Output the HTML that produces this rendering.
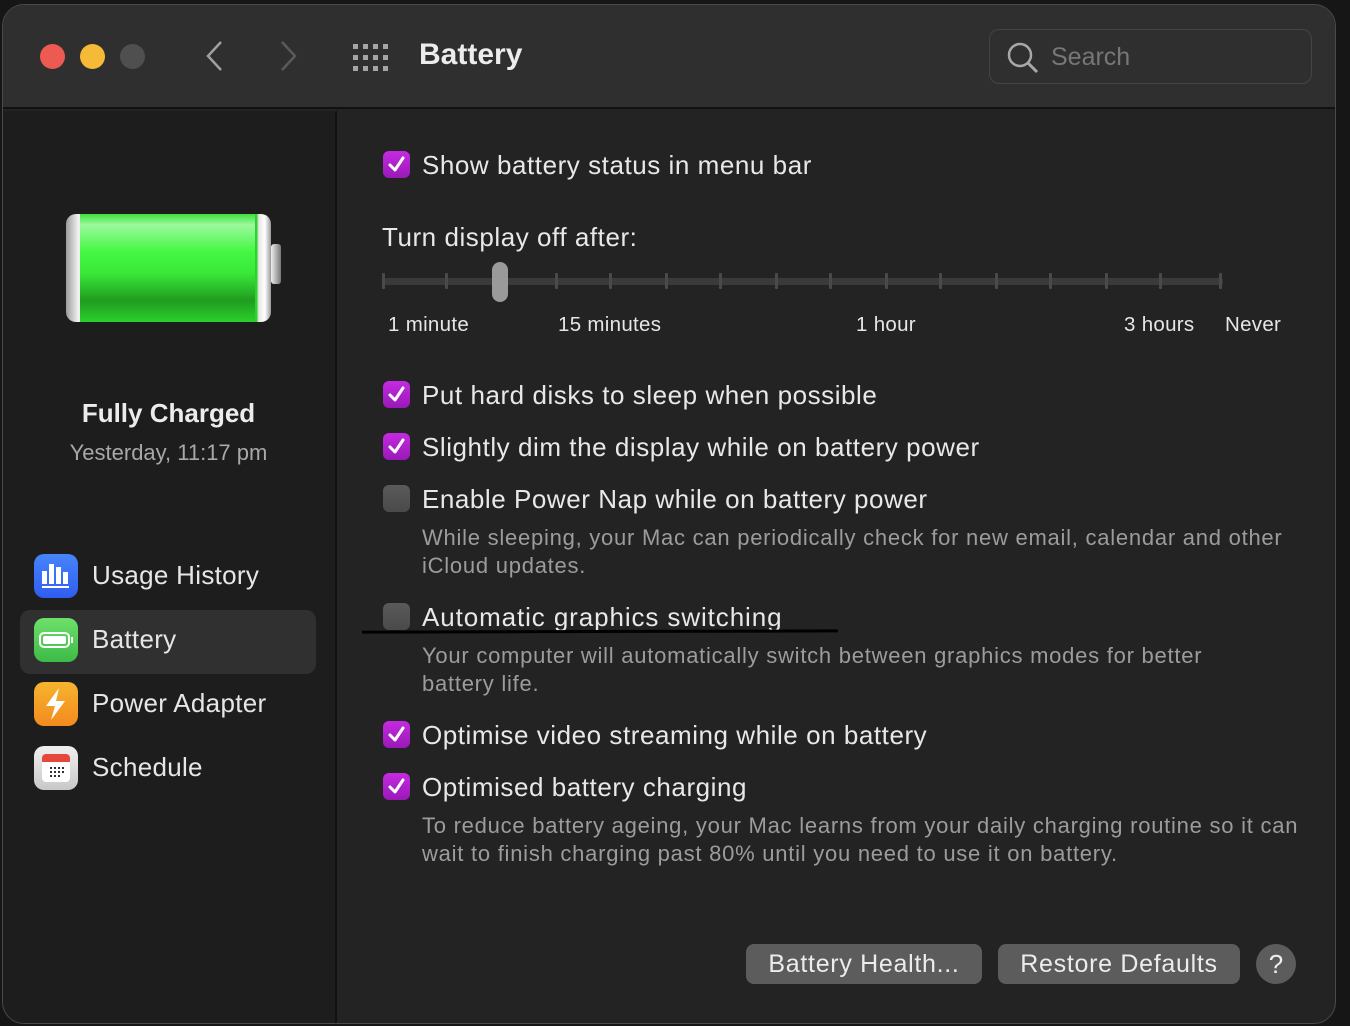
<!DOCTYPE html>
<html><head><meta charset="utf-8"><style>
*{margin:0;padding:0;box-sizing:border-box}
body{width:1350px;height:1026px;background:#161616;font-family:"Liberation Sans",sans-serif;position:relative;overflow:hidden;color:#e6e6e6}
.win{position:absolute;left:2px;top:4px;width:1334px;height:1020px;border-radius:22px;overflow:hidden;background:#232323;border:1px solid #4a4a4a}
.title{position:absolute;left:0;top:0;width:100%;height:104px;background:#2f2f2f;border-bottom:2px solid #111}
.side{position:absolute;left:-3px;top:106px;width:337px;height:920px;background:#1d1d1d;border-right:2px solid #111}
.sb{position:absolute;left:0;top:-5px;width:337px;height:920px}
.a{position:absolute;white-space:nowrap}
.cb{position:absolute;width:27px;height:27px;border-radius:6px;background:linear-gradient(#c42be0,#9a18b8)}
.cb svg{position:absolute;left:4px;top:4px}
.ub{position:absolute;width:27px;height:27px;border-radius:6px;background:linear-gradient(#5a5a5a,#4a4a4a)}
.lbl{font-size:26px;letter-spacing:0.55px;color:#e8e8e8}
.desc{font-size:22px;letter-spacing:0.75px;color:#9c9c9c;line-height:28px}
.sm{font-size:20.5px;letter-spacing:0.3px}
.tick{position:absolute;top:273px;width:3px;height:16px;background:#4a4a4a;border-radius:1px}
.btn{position:absolute;top:944px;height:40px;background:#5c5c5c;border-radius:8px;font-size:25px;letter-spacing:0.7px;color:#ececec;text-align:center;line-height:40px}
.ic{position:absolute;left:34px;width:44px;height:44px;border-radius:10px}
.sl{font-size:26px;letter-spacing:0.3px;left:92px}
</style></head><body>
<div class="win">
<div class="title">
<div class="a" style="left:37px;top:39px;width:25px;height:25px;border-radius:50%;background:#ed5a52"></div>
<div class="a" style="left:77px;top:39px;width:25px;height:25px;border-radius:50%;background:#f6bb36"></div>
<div class="a" style="left:117px;top:39px;width:25px;height:25px;border-radius:50%;background:#4f4f4f"></div>
<svg class="a" style="left:200px;top:34px" width="24" height="34"><path d="M18 3 L5 17 L18 31" stroke="#a0a0a0" stroke-width="2.5" fill="none"/></svg>
<svg class="a" style="left:274px;top:34px" width="24" height="34"><path d="M5 3 L18 17 L5 31" stroke="#5a5a5a" stroke-width="2.5" fill="none"/></svg>
<svg class="a" style="left:350px;top:39px" width="38" height="30" fill="#a5a5a5">
<rect x="0" y="0" width="5" height="5"/><rect x="10" y="0" width="5" height="5"/><rect x="20" y="0" width="5" height="5"/><rect x="30" y="0" width="5" height="5"/>
<rect x="0" y="11" width="5" height="5"/><rect x="10" y="11" width="5" height="5"/><rect x="20" y="11" width="5" height="5"/><rect x="30" y="11" width="5" height="5"/>
<rect x="0" y="22" width="5" height="5"/><rect x="10" y="22" width="5" height="5"/><rect x="20" y="22" width="5" height="5"/><rect x="30" y="22" width="5" height="5"/></svg>
<div class="a" style="left:416px;top:33px;font-size:30px;font-weight:bold;color:#ececec">Battery</div>
<div class="a" style="left:986px;top:24px;width:323px;height:55px;border:1.5px solid #444;border-radius:10px;background:#2f2f2f"></div>
<svg class="a" style="left:1003px;top:36px" width="34" height="36"><circle cx="14" cy="14" r="11" stroke="#a8a8a8" stroke-width="2.5" fill="none"/><path d="M22 22 L31 31" stroke="#a8a8a8" stroke-width="3"/></svg>
<div class="a" style="left:1048px;top:38px;font-size:25px;color:#777">Search</div>
</div>
<div class="side"><div class="sb">
<div class="a" style="left:66px;top:108px;width:205px;height:108px;border-radius:10px;background:linear-gradient(90deg,#9a9a9a,#f2f2f2 6%,#cfcfcf 12%,#2ed02e 13%,#2ed02e 93%,#e6e6e6 94%,#fff 97%,#999)"></div>
<div class="a" style="left:80px;top:108px;width:175px;height:108px;background:linear-gradient(#3de03d,#9cf99c 10%,#44f844 35%,#39e839 55%,#1f9c1f 80%,#2bd02b)"></div>
<div class="a" style="left:271px;top:138px;width:10px;height:40px;border-radius:3px;background:linear-gradient(90deg,#eee,#777)"></div>
<div class="a" style="left:0;width:337px;text-align:center;top:292px;font-size:26px;font-weight:bold;color:#ececec">Fully Charged</div>
<div class="a" style="left:0;width:337px;text-align:center;top:334px;font-size:22px;color:#a8a8a8">Yesterday, 11:17 pm</div>
<div class="a" style="left:20px;top:504px;width:296px;height:64px;border-radius:10px;background:#303030"></div>
<div class="ic" style="top:448px;background:linear-gradient(#4785fb,#2f5df0)"><svg width="44" height="44"><g fill="#fff"><rect x="8" y="17" width="5" height="13"/><rect x="15" y="10" width="5" height="20"/><rect x="22" y="13" width="5" height="17"/><rect x="29" y="18" width="5" height="12"/><rect x="8" y="32" width="27" height="2"/></g></svg></div>
<div class="a sl" style="top:454px">Usage History</div>
<div class="ic" style="top:512px;background:linear-gradient(#6ee06a,#3cbb47)"><svg width="44" height="44"><rect x="6" y="15" width="29" height="14" rx="4" stroke="#fff" stroke-width="2" fill="none"/><rect x="9" y="18" width="23" height="8" rx="2" fill="#fff"/><rect x="37" y="19" width="2" height="6" fill="#fff"/></svg></div>
<div class="a sl" style="top:518px">Battery</div>
<div class="ic" style="top:576px;background:linear-gradient(#f6b42d,#f38a1f)"><svg width="44" height="44"><path d="M25 6 L12 24 L21 24 L17 38 L31 19 L22 19 Z" fill="#fff"/></svg></div>
<div class="a sl" style="top:582px">Power Adapter</div>
<div class="ic" style="top:640px;background:linear-gradient(#f0f0f0,#c8c8c8)"><svg width="44" height="44"><rect x="8" y="8" width="28" height="28" rx="4" fill="#fff"/><path d="M8 16 V12 a4 4 0 0 1 4 -4 H32 a4 4 0 0 1 4 4 V16 Z" fill="#e5473c"/><g fill="#333"><rect x="16" y="21" width="2" height="2"/><rect x="20" y="21" width="2" height="2"/><rect x="24" y="21" width="2" height="2"/><rect x="28" y="21" width="2" height="2"/><rect x="16" y="25" width="2" height="2"/><rect x="20" y="25" width="2" height="2"/><rect x="24" y="25" width="2" height="2"/><rect x="28" y="25" width="2" height="2"/><rect x="16" y="29" width="2" height="2"/><rect x="20" y="29" width="2" height="2"/><rect x="24" y="29" width="2" height="2"/></g></svg></div>
<div class="a sl" style="top:646px">Schedule</div>
</div></div>
</div>
<div class="cb" style="left:383px;top:151px"><svg width="19" height="19"><path d="M3 10 L8 15 L16 3" stroke="#fff" stroke-width="3" fill="none" stroke-linecap="round" stroke-linejoin="round"/></svg></div>
<div class="a lbl" style="left:422px;top:150px">Show battery status in menu bar</div>
<div class="a lbl" style="left:382px;top:222px">Turn display off after:</div>
<div class="a" style="left:383px;top:278px;width:840px;height:7px;background:#3a3a3a;border-radius:3px"></div>
<div class="tick" style="left:382px"></div><div class="tick" style="left:445px"></div><div class="tick" style="left:555px"></div><div class="tick" style="left:609px"></div><div class="tick" style="left:665px"></div><div class="tick" style="left:719px"></div><div class="tick" style="left:775px"></div><div class="tick" style="left:829px"></div><div class="tick" style="left:885px"></div><div class="tick" style="left:939px"></div><div class="tick" style="left:995px"></div><div class="tick" style="left:1049px"></div><div class="tick" style="left:1105px"></div><div class="tick" style="left:1159px"></div><div class="tick" style="left:1219px"></div>
<div class="a" style="left:492px;top:262px;width:16px;height:40px;border-radius:8px;background:#9a9a9a"></div>
<div class="a sm" style="left:388px;top:313px">1 minute</div>
<div class="a sm" style="left:558px;top:313px">15 minutes</div>
<div class="a sm" style="left:856px;top:313px">1 hour</div>
<div class="a sm" style="left:1124px;top:313px">3 hours</div>
<div class="a sm" style="left:1225px;top:313px">Never</div>
<div class="cb" style="left:383px;top:381px"><svg width="19" height="19"><path d="M3 10 L8 15 L16 3" stroke="#fff" stroke-width="3" fill="none" stroke-linecap="round" stroke-linejoin="round"/></svg></div>
<div class="a lbl" style="left:422px;top:380px">Put hard disks to sleep when possible</div>
<div class="cb" style="left:383px;top:433px"><svg width="19" height="19"><path d="M3 10 L8 15 L16 3" stroke="#fff" stroke-width="3" fill="none" stroke-linecap="round" stroke-linejoin="round"/></svg></div>
<div class="a lbl" style="left:422px;top:432px">Slightly dim the display while on battery power</div>
<div class="ub" style="left:383px;top:485px"></div>
<div class="a lbl" style="left:422px;top:484px">Enable Power Nap while on battery power</div>
<div class="a desc" style="left:422px;top:524px">While sleeping, your Mac can periodically check for new email, calendar and other<br>iCloud updates.</div>
<div class="ub" style="left:383px;top:603px"></div>
<div class="a lbl" style="left:422px;top:602px;letter-spacing:0.9px">Automatic graphics switching</div>
<div class="a" style="left:362px;top:630px;width:476px;height:3px;background:#000;transform:rotate(-0.15deg)"></div>
<div class="a desc" style="left:422px;top:642px">Your computer will automatically switch between graphics modes for better<br>battery life.</div>
<div class="cb" style="left:383px;top:721px"><svg width="19" height="19"><path d="M3 10 L8 15 L16 3" stroke="#fff" stroke-width="3" fill="none" stroke-linecap="round" stroke-linejoin="round"/></svg></div>
<div class="a lbl" style="left:422px;top:720px">Optimise video streaming while on battery</div>
<div class="cb" style="left:383px;top:773px"><svg width="19" height="19"><path d="M3 10 L8 15 L16 3" stroke="#fff" stroke-width="3" fill="none" stroke-linecap="round" stroke-linejoin="round"/></svg></div>
<div class="a lbl" style="left:422px;top:772px">Optimised battery charging</div>
<div class="a desc" style="left:422px;top:812px">To reduce battery ageing, your Mac learns from your daily charging routine so it can<br>wait to finish charging past 80% until you need to use it on battery.</div>
<div class="btn" style="left:746px;width:236px">Battery Health...</div>
<div class="btn" style="left:998px;width:242px">Restore Defaults</div>
<div class="a" style="left:1256px;top:944px;width:40px;height:40px;border-radius:50%;background:#5c5c5c;color:#eee;font-size:26px;text-align:center;line-height:40px">?</div>
</body></html>
